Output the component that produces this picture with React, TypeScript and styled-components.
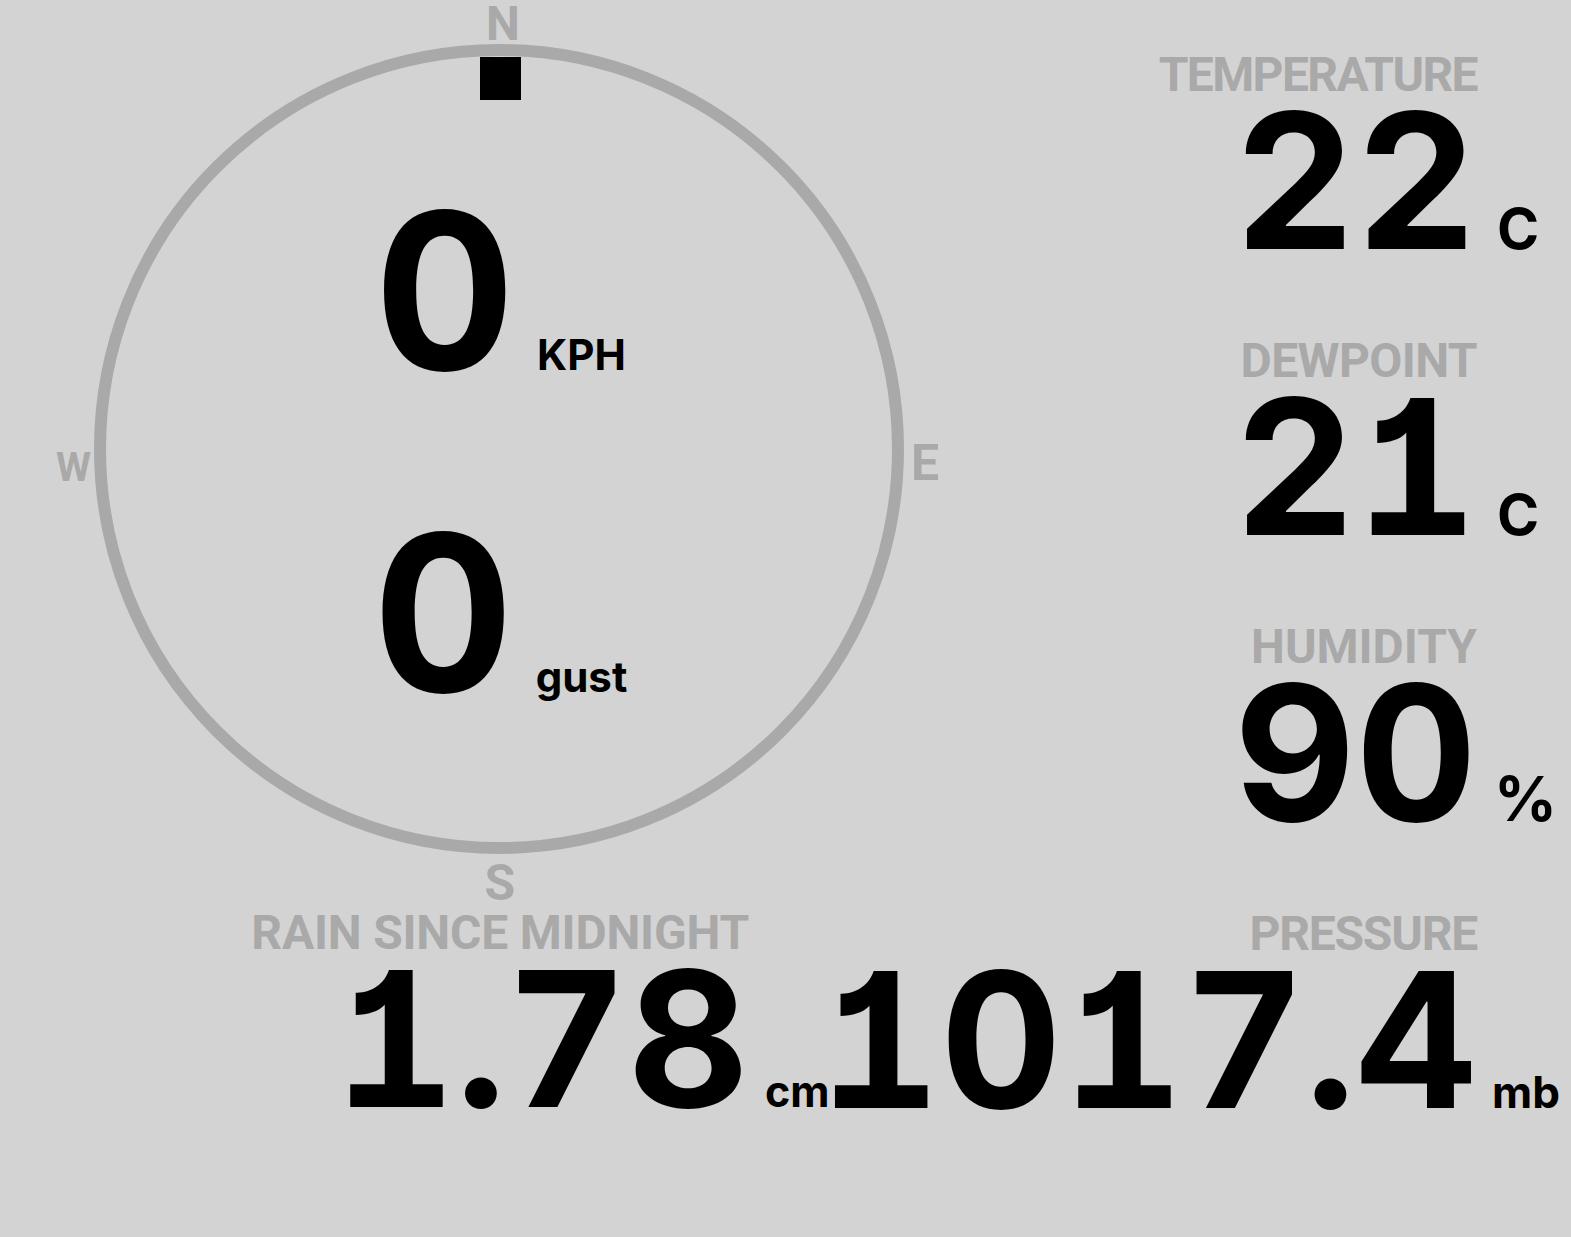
import React from "react";
import styled, { createGlobalStyle } from "styled-components";

const GlobalStyle = createGlobalStyle`
  html, body {
    margin: 0;
    padding: 0;
    background: #d3d3d3;
  }
  body {
    font-family: Roboto, "Liberation Sans", sans-serif;
  }
`;

const LABEL_GRAY = "#a9a9a9";
const NUM_FONT = `Inter, Roboto, "Liberation Sans", sans-serif`;
const LABEL_FONT = `Roboto, "Liberation Sans", sans-serif`;

const Page = styled.div`
  display: flex;
  width: 1571px;
  height: 1237px;
  background: #d3d3d3;
  overflow: hidden;
  color: #000;
`;

const LeftColumn = styled.div`
  width: 998px;
  flex: none;
  display: flex;
  flex-direction: column;
`;

const RightColumn = styled.div`
  flex: 1;
  min-width: 0;
  display: flex;
  flex-direction: column;
  gap: 80px;
  padding-top: 51px;
`;

const Dial = styled.div`
  position: relative;
  height: 909px;
  box-sizing: border-box;
  display: flex;
  flex-direction: column;
  align-items: center;
  gap: 148px;
  padding-top: 204px;
  padding-left: 2px;
`;

const DialFace = styled.svg`
  position: absolute;
  left: 0;
  top: 0;
  width: 998px;
  height: 909px;
  overflow: visible;
`;

const Cardinal = styled.text`
  font-family: ${LABEL_FONT};
  font-weight: 700;
  fill: ${LABEL_GRAY};
`;

const Reading = styled.div`
  position: relative;
  display: flex;
  align-items: baseline;
  gap: 22px;
`;

const ReadingValue = styled.span`
  font-family: ${NUM_FONT};
  font-weight: 700;
  font-size: 218px;
  line-height: 174px;
  font-feature-settings: "tnum" 1, "cv01" 1;
`;

const ReadingUnit = styled.span<{ $size: number }>`
  font-family: ${NUM_FONT};
  font-weight: 700;
  font-size: ${(p) => p.$size}px;
  line-height: 1;
`;

const Stat = styled.div<{ $fluid?: boolean }>`
  display: grid;
  grid-template-columns: ${(p) => (p.$fluid ? "minmax(0, 1fr)" : "auto")} 74px;
  column-gap: 20px;
  row-gap: 7px;
  align-items: baseline;
`;

const RainStat = styled(Stat)`
  align-self: flex-end;
  margin-right: 155px;
`;

const Label = styled.div<{ $tracking?: number }>`
  grid-column: 1;
  justify-self: end;
  font-family: ${LABEL_FONT};
  font-weight: 700;
  font-size: 48px;
  line-height: 48px;
  letter-spacing: ${(p) => p.$tracking ?? -1}px;
  color: ${LABEL_GRAY};
  white-space: nowrap;
`;

const Value = styled.div`
  grid-column: 1;
  min-width: 0;
  display: flex;
  justify-content: flex-end;
  font-family: ${NUM_FONT};
  font-weight: 700;
  font-size: 188px;
  line-height: 150px;
  font-feature-settings: "tnum" 1, "cv01" 1;
  white-space: nowrap;
`;

const Unit = styled.div<{ $size: number; $upper?: boolean; $nudge?: number }>`
  grid-column: 2;
  margin-left: ${(p) => p.$nudge ?? 0}px;
  font-family: ${NUM_FONT};
  font-weight: 700;
  font-size: ${(p) => p.$size}px;
  line-height: 1;
  text-transform: ${(p) => (p.$upper ? "uppercase" : "none")};
  white-space: nowrap;
`;

type StatProps = {
  label: string;
  value: string;
  unit: string;
  unitSize: number;
  upper?: boolean;
  tracking?: number;
  nudge?: number;
};

const WeatherStat = ({ label, value, unit, unitSize, upper, tracking, nudge }: StatProps) => (
  <Stat $fluid>
    <Label $tracking={tracking}>{label}</Label>
    <Value>
      <span>{value}</span>
    </Value>
    <Unit $size={unitSize} $upper={upper} $nudge={nudge}>
      {unit}
    </Unit>
  </Stat>
);

const Compass = () => (
  <Dial>
    <DialFace viewBox="0 0 998 909">
      <circle cx="499" cy="449" r="399" fill="none" stroke={LABEL_GRAY} strokeWidth="12" />
      <rect x="480" y="57" width="41" height="43" fill="#000" />
      <Cardinal x="503" y="40" fontSize="48" textAnchor="middle">
        N
      </Cardinal>
      <Cardinal x="911" y="480" fontSize="50" textAnchor="start">
        E
      </Cardinal>
      <Cardinal x="500" y="900" fontSize="50" textAnchor="middle">
        S
      </Cardinal>
      <Cardinal x="91" y="481" fontSize="40" textAnchor="end">
        W
      </Cardinal>
    </DialFace>
    <Reading>
      <ReadingValue>0</ReadingValue>
      <ReadingUnit $size={42}>KPH</ReadingUnit>
    </Reading>
    <Reading>
      <ReadingValue>0</ReadingValue>
      <ReadingUnit $size={42}>gust</ReadingUnit>
    </Reading>
  </Dial>
);

export default function App() {
  return (
    <>
      <GlobalStyle />
      <Page>
        <LeftColumn>
          <Compass />
          <RainStat>
            <Label $tracking={-0.2}>RAIN SINCE MIDNIGHT</Label>
            <Value>
              <span>1.78</span>
            </Value>
            <Unit $size={43} $nudge={-4}>
              cm
            </Unit>
          </RainStat>
        </LeftColumn>
        <RightColumn>
          <WeatherStat label="TEMPERATURE" value="22" unit="c" unitSize={57} upper tracking={-1.6} />
          <WeatherStat label="DEWPOINT" value="21" unit="c" unitSize={57} upper tracking={-0.6} />
          <WeatherStat label="HUMIDITY" value="90" unit="%" unitSize={62} tracking={0} nudge={-3} />
          <WeatherStat label="PRESSURE" value="1017.4" unit="mb" unitSize={44} tracking={-1.2} nudge={-5} />
        </RightColumn>
      </Page>
    </>
  );
}
